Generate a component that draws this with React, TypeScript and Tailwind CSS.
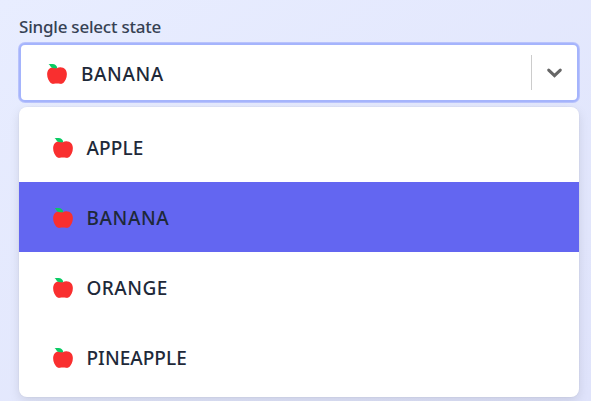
const options = [
  { label: 'APPLE', tracking: 'tracking-[0.15px]' },
  { label: 'BANANA', tracking: 'tracking-[0.6px]' },
  { label: 'ORANGE', tracking: 'tracking-[0.45px]' },
  { label: 'PINEAPPLE', tracking: 'tracking-[0.03px]' },
];

function Apple() {
  return (
    <svg width="20" height="20" viewBox="0 0 20 20" className="shrink-0" aria-hidden="true">
      <path d="M9.9 4.2C7.8 2.6 3.6 3 1.6 5.4C-.3 7.7-.3 12.3 1.3 15.6C2.8 18.7 4.6 20.4 7 19.8C8.8 19.4 11.2 19.4 13 19.8C15.4 20.4 17.2 18.7 18.7 15.6C20.3 12.3 20.3 7.7 18.4 5.4C16.4 3 12.2 2.6 9.9 4.2Z" fill="#f92f2f" />
      <path d="M1.5 .1C4-.2 7-.2 8.5 .9C9.7 1.8 10.3 2.9 10.2 4.3C8 4.1 6.2 4.4 4.4 3.4C3 2.5 3.2 1 1.5 .1Z" fill="#0acb64" />
    </svg>
  );
}

export default function App() {
  return (
    <main className="h-[401px] w-[591px] overflow-hidden bg-linear-to-br from-[#e8edff] to-[#dfe3fb] pr-3 pl-[19px] pt-[15px] font-['Noto_Sans',sans-serif] font-medium">
      <div className="flex h-7 items-start text-[17px] leading-6 tracking-[-0.22px] text-gray-700">Single select state</div>
      <div className="flex h-[59px] items-center rounded-md border-2 border-[#a5b4fc] bg-white pl-[26px] shadow-[0_0_0_1px_#b9c3fc]">
        <div className="flex items-center gap-[14px] pt-[3px]">
          <Apple />
          <span className="text-[19px] tracking-[0.6px] text-gray-800">BANANA</span>
        </div>
        <div className="ml-auto h-[35px] w-px bg-[#cccccc]" />
        <div className="flex w-[45px] items-center justify-center pt-px">
          <svg width="18" height="12" viewBox="0 0 18 12" aria-hidden="true">
            <path d="M2.7 3.1L8.5 8.7L14.3 3.1" fill="none" stroke="#666666" strokeWidth="3" strokeLinecap="round" />
          </svg>
        </div>
      </div>
      <div className="mt-[5px] h-[290px] rounded-lg bg-white py-[5px] shadow-[0_4px_11px_rgba(0,0,0,0.1),0_0_0_1px_rgba(0,0,0,0.02)]">
        {options.map(({ label, tracking }) => (
          <div key={label} className={`flex h-[70px] items-center pt-0.5 pl-[34px] ${label === 'BANANA' ? 'bg-[#6366f1]' : ''}`}>
            <Apple />
            <span className={`ml-[13.5px] text-[19px] text-gray-800 ${tracking}`}>{label}</span>
          </div>
        ))}
      </div>
    </main>
  );
}
